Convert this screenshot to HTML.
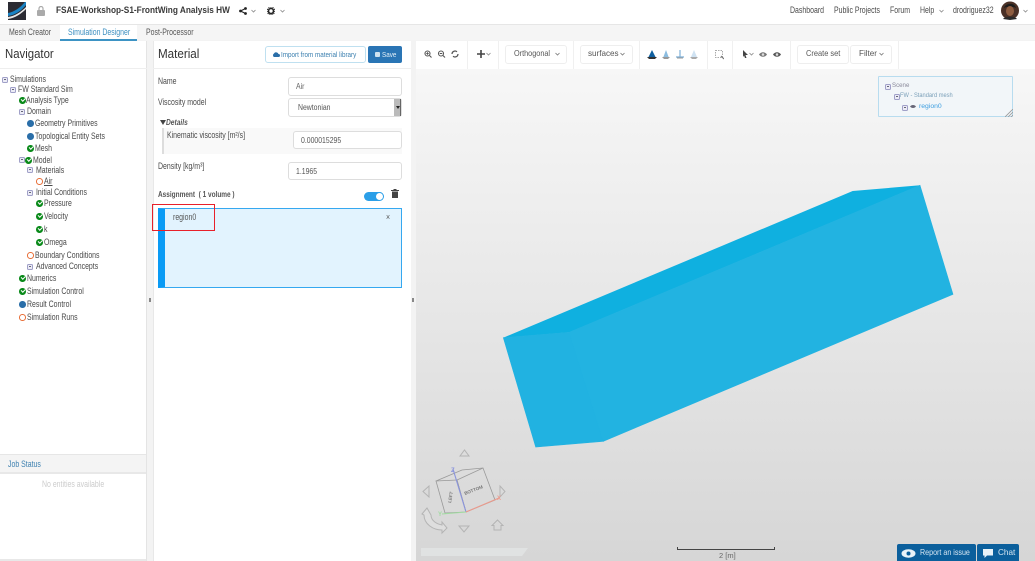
<!DOCTYPE html>
<html><head><meta charset="utf-8"><style>
html,body{margin:0;padding:0}
body{width:1035px;height:561px;overflow:hidden;position:relative;background:#f3f3f3;font-family:"Liberation Sans",sans-serif;font-size:8.800px;color:#4a4a4a}
.b{position:absolute;box-sizing:border-box}
.t{position:absolute;white-space:nowrap;line-height:10px;transform:scaleX(.79);transform-origin:left center}
.ok,.dot,.ring,.ex{position:absolute;box-sizing:border-box;border-radius:50%;width:6.500px;height:6.500px}
.ok{background:#0a8a1a}
.ok:after{content:"";position:absolute;left:1.500px;top:1.300px;width:2.800px;height:1.500px;border-left:1px solid #fff;border-bottom:1px solid #fff;transform:rotate(-45deg)}
.dot{background:#2a6ea8}
.ring{border:1.300px solid #e8703a;background:#fff}
.ex{width:5.500px;height:5.500px;border-radius:1.500px;border:1px solid #a0a0c8;background:#ececf6}
.ex:after{content:"";position:absolute;left:.7px;top:1.200px;width:2.200px;height:1px;background:#667}
.in{position:absolute;box-sizing:border-box;background:#fff;border:1px solid #ddd;border-radius:3px;color:#555;font-size:8px;line-height:17px;padding-left:7px;white-space:nowrap}
.in span{display:inline-block;transform:scaleX(.86);transform-origin:left center}
</style></head><body>
<!-- top bar -->
<div class="b" style="left:0;top:0;width:1035px;height:25px;background:#fff;border-bottom:1px solid #e6e6e6"></div>
<svg class="b" style="left:8px;top:2px" width="18" height="18" viewBox="0 0 18 18"><rect width="18" height="18" fill="#2b2b33"/><path d="M0 11C6 10 12 6 17 0H18V3C13 9 7 13 0 14Z" fill="#1a83c4"/><path d="M0 15C7 14 13 10 18 5V7C13 12 7 16 0 17Z" fill="#e8e8e8"/></svg>
<svg class="b" style="left:37px;top:6px" width="8" height="10" viewBox="0 0 8 10"><path d="M2 4V2.500a2 2 0 0 1 4 0V4" fill="none" stroke="#aaa" stroke-width="1.200"/><rect y="4" width="8" height="6" rx="1" fill="#aaa"/></svg>
<div class="t" style="left:56px;top:5px;font-size:9.500px;font-weight:bold;color:#3a3a3a;line-height:12px;transform:scaleX(.87)">FSAE-Workshop-S1-FrontWing Analysis HW</div>
<svg class="b" style="left:239px;top:7px" width="8" height="8" viewBox="0 0 8 8"><circle cx="1.500" cy="4" r="1.400" fill="#222"/><circle cx="6.500" cy="1.500" r="1.400" fill="#222"/><circle cx="6.500" cy="6.500" r="1.400" fill="#222"/><path d="M1.500 4L6.500 1.500M1.500 4L6.500 6.500" stroke="#222"/></svg>
<svg class="b" style="left:251px;top:9px" width="5" height="4" viewBox="0 0 5 4"><path d="M.5 1L2.500 3L4.500 1" fill="none" stroke="#888" stroke-width=".8"/></svg>
<svg class="b" style="left:267px;top:7px" width="8" height="8" viewBox="0 0 8 8"><circle cx="4" cy="4" r="2.500" fill="none" stroke="#222" stroke-width="1.600"/><circle cx="4" cy="4" r="3.900" fill="none" stroke="#222" stroke-width="1" stroke-dasharray="1.200 1"/></svg>
<svg class="b" style="left:280px;top:9px" width="5" height="4" viewBox="0 0 5 4"><path d="M.5 1L2.500 3L4.500 1" fill="none" stroke="#888" stroke-width=".8"/></svg>
<div class="t" style="left:790px;top:5px">Dashboard</div>
<div class="t" style="left:834px;top:5px">Public Projects</div>
<div class="t" style="left:890px;top:5px">Forum</div>
<div class="t" style="left:920px;top:5px">Help</div>
<svg class="b" style="left:939px;top:9px" width="5" height="4" viewBox="0 0 5 4"><path d="M.5 1L2.500 3L4.500 1" fill="none" stroke="#888" stroke-width=".8"/></svg>
<div class="t" style="left:953px;top:5px">drodriguez32</div>
<svg class="b" style="left:1001px;top:1px" width="18" height="19" viewBox="0 0 18 19"><circle cx="9" cy="9.500" r="9" fill="#4a3026"/><path d="M3 7C4 2 14 1 15 7L13 6H5Z" fill="#1c1c1c"/><ellipse cx="9" cy="10" rx="4" ry="5" fill="#8f5d40"/><path d="M2 18C4 15 14 15 16 18L9 19Z" fill="#2a2a2a"/></svg>
<svg class="b" style="left:1023px;top:9px" width="5" height="4" viewBox="0 0 5 4"><path d="M.5 1L2.500 3L4.500 1" fill="none" stroke="#888" stroke-width=".8"/></svg>

<!-- tabs -->
<div class="b" style="left:0;top:25px;width:1035px;height:15px;background:#f5f5f5"></div>
<div class="b" style="left:60px;top:25px;width:77px;height:16px;background:#fff;border-bottom:2px solid #3d93c4"></div>
<div class="t" style="left:9px;top:27px;color:#555">Mesh Creator</div>
<div class="t" style="left:68px;top:27px;color:#3d8fc0">Simulation Designer</div>
<div class="t" style="left:146px;top:27px;color:#555">Post-Processor</div>

<!-- navigator -->
<div class="b" style="left:0;top:41px;width:147px;height:520px;background:#fff;border-right:1px solid #e4e4e4"></div>
<div class="b" style="left:0;top:68px;width:147px;height:1px;background:#eee"></div>
<div class="t" style="left:5px;top:47px;font-size:12.500px;line-height:14px;color:#333;transform:scaleX(.91)">Navigator</div>
<i class="ex" style="left:2px;top:77px"></i><div class="t" style="left:10px;top:74px">Simulations</div>
<i class="ex" style="left:10px;top:87px"></i><div class="t" style="left:18px;top:84px">FW Standard Sim</div>
<i class="ok" style="left:19px;top:97px"></i><div class="t" style="left:26px;top:95px">Analysis Type</div>
<i class="ex" style="left:19px;top:109px"></i><div class="t" style="left:27px;top:106px">Domain</div>
<i class="dot" style="left:27px;top:120px"></i><div class="t" style="left:35px;top:118px">Geometry Primitives</div>
<i class="dot" style="left:27px;top:133px"></i><div class="t" style="left:35px;top:131px">Topological Entity Sets</div>
<i class="ok" style="left:27px;top:145px"></i><div class="t" style="left:35px;top:143px">Mesh</div>
<i class="ex" style="left:19px;top:157px"></i><i class="ok" style="left:25px;top:157px"></i><div class="t" style="left:33px;top:155px">Model</div>
<i class="ex" style="left:27px;top:167px"></i><div class="t" style="left:36px;top:165px">Materials</div>
<i class="ring" style="left:36px;top:178px"></i><div class="t" style="left:44px;top:176px;text-decoration:underline">Air</div>
<i class="ex" style="left:27px;top:190px"></i><div class="t" style="left:36px;top:187px">Initial Conditions</div>
<i class="ok" style="left:36px;top:200px"></i><div class="t" style="left:44px;top:198px">Pressure</div>
<i class="ok" style="left:36px;top:213px"></i><div class="t" style="left:44px;top:211px">Velocity</div>
<i class="ok" style="left:36px;top:226px"></i><div class="t" style="left:44px;top:224px">k</div>
<i class="ok" style="left:36px;top:239px"></i><div class="t" style="left:44px;top:237px">Omega</div>
<i class="ring" style="left:27px;top:252px"></i><div class="t" style="left:35px;top:250px">Boundary Conditions</div>
<i class="ex" style="left:27px;top:264px"></i><div class="t" style="left:36px;top:261px">Advanced Concepts</div>
<i class="ok" style="left:19px;top:275px"></i><div class="t" style="left:27px;top:273px">Numerics</div>
<i class="ok" style="left:19px;top:288px"></i><div class="t" style="left:27px;top:286px">Simulation Control</div>
<i class="dot" style="left:19px;top:301px"></i><div class="t" style="left:27px;top:299px">Result Control</div>
<i class="ring" style="left:19px;top:314px"></i><div class="t" style="left:27px;top:312px">Simulation Runs</div>
<div class="b" style="left:149px;top:298px;width:2px;height:4px;background:#888"></div>
<div class="b" style="left:0;top:454px;width:146px;height:20px;background:#f4f4f4;border-top:1px solid #e6e6e6;border-bottom:2px solid #e8e8e8"></div>
<div class="t" style="left:8px;top:459px;color:#3d80b0">Job Status</div>
<div class="t" style="left:42px;top:479px;color:#ccc">No entities available</div>
<div class="b" style="left:0;top:559px;width:146px;height:2px;background:#e8e8e8"></div>

<!-- material panel -->
<div class="b" style="left:153px;top:41px;width:258px;height:520px;background:#fff;border-left:1px solid #e8e8e8"></div>
<div class="b" style="left:153px;top:68px;width:258px;height:1px;background:#eee"></div>
<div class="t" style="left:158px;top:47px;font-size:12.500px;line-height:14px;color:#333;transform:scaleX(.93)">Material</div>
<div class="b" style="left:265px;top:46px;width:101px;height:17px;border:1px solid #bfe0f0;border-radius:3px;background:#fff"></div>
<svg class="b" style="left:272px;top:51px" width="8" height="7" viewBox="0 0 8 7"><path d="M2 6a2 2 0 0 1 0-3.500A2.500 2.500 0 0 1 6.500 3 1.500 1.500 0 0 1 6.500 6Z" fill="#2a6ea8"/></svg>
<div class="t" style="left:281px;top:50px;color:#3d80b0;font-size:7.600px;transform:scaleX(.83)">Import from material library</div>
<div class="b" style="left:368px;top:46px;width:34px;height:17px;background:#2a75b5;border-radius:2px"></div>
<div class="b" style="left:375px;top:52px;width:5px;height:5px;background:#cfe2f0;border-radius:1px"></div>
<div class="t" style="left:382px;top:50px;color:#e4f0f8;font-size:7.600px;transform:scaleX(.83)">Save</div>

<div class="t" style="left:158px;top:76px">Name</div>
<div class="in" style="left:288px;top:77px;width:114px;height:19px;color:#666"><span>Air</span></div>
<div class="t" style="left:158px;top:97px">Viscosity model</div>
<div class="in" style="left:288px;top:98px;width:114px;height:19px;padding-left:9px"><span>Newtonian</span></div>
<div class="b" style="left:394px;top:99px;width:7px;height:17px;background:#bbb;border-right:1px solid #666"></div>
<div class="b" style="left:396px;top:106px;border:2px solid transparent;border-top:3px solid #222;width:0;height:0"></div>
<div class="b" style="left:160px;top:120px;border:3px solid transparent;border-top:5px solid #444;width:0;height:0"></div>
<div class="t" style="left:166px;top:118px;font-style:italic;font-weight:bold;color:#555;font-size:8px;transform:scaleX(.83)">Details</div>
<div class="b" style="left:162px;top:128px;width:240px;height:26px;background:#f9f9f9;border-left:2px solid #ddd"></div>
<div class="t" style="left:167px;top:130px">Kinematic viscosity [m²/s]</div>
<div class="in" style="left:293px;top:131px;width:109px;height:18px;padding-left:7px"><span>0.000015295</span></div>
<div class="t" style="left:158px;top:161px">Density [kg/m³]</div>
<div class="in" style="left:288px;top:162px;width:114px;height:18px"><span>1.1965</span></div>
<div class="t" style="left:158px;top:190px;font-weight:bold;color:#555;font-size:7.800px;transform:scaleX(.83)">Assignment &nbsp;( 1 volume )</div>
<div class="b" style="left:364px;top:192px;width:20px;height:9px;background:#2b9fe8;border-radius:5px"></div>
<div class="b" style="left:376px;top:193px;width:7px;height:7px;background:#fff;border-radius:50%"></div>
<svg class="b" style="left:391px;top:189px" width="8" height="9" viewBox="0 0 8 9"><path d="M0 1.500H8M3 1.500V.5H5V1.500" stroke="#444" fill="none"/><path d="M1 2.500H7V9H1Z" fill="#444"/></svg>
<div class="b" style="left:158px;top:208px;width:244px;height:80px;background:#e2f3fe;border:1px solid #35a8f0;border-left:7px solid #0a9bf5"></div>
<div class="t" style="left:173px;top:212px;color:#555">region0</div>
<div class="t" style="left:386px;top:212px;color:#555">×</div>
<div class="b" style="left:152px;top:204px;width:63px;height:27px;border:1px solid #e8202a"></div>
<div class="b" style="left:412px;top:298px;width:2px;height:4px;background:#888"></div>

<!-- viewport -->
<div class="b" style="left:416px;top:69px;width:619px;height:492px;background:linear-gradient(#f7f7f7,#d6d6d6)"></div>
<div class="b" style="left:416px;top:41px;width:619px;height:28px;background:#fff"></div>
<div class="b" style="left:467px;top:41px;width:1px;height:28px;background:#f0f0f0"></div>
<div class="b" style="left:498px;top:41px;width:1px;height:28px;background:#f0f0f0"></div>
<div class="b" style="left:573px;top:41px;width:1px;height:28px;background:#f0f0f0"></div>
<div class="b" style="left:639px;top:41px;width:1px;height:28px;background:#f0f0f0"></div>
<div class="b" style="left:707px;top:41px;width:1px;height:28px;background:#f0f0f0"></div>
<div class="b" style="left:732px;top:41px;width:1px;height:28px;background:#f0f0f0"></div>
<div class="b" style="left:790px;top:41px;width:1px;height:28px;background:#f0f0f0"></div>
<div class="b" style="left:898px;top:41px;width:1px;height:28px;background:#f0f0f0"></div>
<svg class="b" style="left:424px;top:50px" width="40" height="8" viewBox="0 0 40 8" fill="none" stroke="#555" stroke-width="1.100"><circle cx="3.500" cy="3.500" r="2.500"/><path d="M5.500 5.500L7.500 7.500M2.300 3.500H4.700M3.500 2.300V4.700"/><circle cx="17" cy="3.500" r="2.500"/><path d="M19 5.500L21 7.500M15.800 3.500H18.200"/><path d="M28 4a3 3 0 0 1 5-2.200M34 4a3 3 0 0 1-5 2.200" stroke-width="1.200"/></svg>
<svg class="b" style="left:477px;top:50px" width="8" height="8" viewBox="0 0 8 8"><path d="M4 0V8M0 4H8" stroke="#444" stroke-width="1.600"/></svg>
<svg class="b" style="left:486px;top:52px" width="5" height="4" viewBox="0 0 5 4"><path d="M.5 1L2.500 3L4.500 1" fill="none" stroke="#888" stroke-width=".8"/></svg>
<div class="b" style="left:505px;top:45px;width:62px;height:19px;border:1px solid #eee;border-radius:3px"></div>
<div class="t" style="left:514px;top:49px;font-size:8.100px;color:#555;transform:scaleX(.9)">Orthogonal</div>
<svg class="b" style="left:555px;top:52px" width="5" height="4" viewBox="0 0 5 4"><path d="M.5 1L2.500 3L4.500 1" fill="none" stroke="#777" stroke-width=".8"/></svg>
<div class="b" style="left:580px;top:45px;width:53px;height:19px;border:1px solid #eee;border-radius:3px"></div>
<div class="t" style="left:588px;top:49px;font-size:8.100px;color:#555;transform:none">surfaces</div>
<svg class="b" style="left:620px;top:52px" width="5" height="4" viewBox="0 0 5 4"><path d="M.5 1L2.500 3L4.500 1" fill="none" stroke="#777" stroke-width=".8"/></svg>
<svg class="b" style="left:647px;top:50px" width="54" height="10" viewBox="0 0 54 10"><path d="M5 0L9 8H1Z" fill="#0f5f9f"/><path d="M0 7H10L8 9H2Z" fill="#333"/><path d="M19 0L22 8H16Z" fill="#8cbde0"/><path d="M15 7H23L21 9H17Z" fill="#999"/><path d="M33 0V7M29 7H37" stroke="#7fb0d8" stroke-width="1.200"/><path d="M30 8L36 8" stroke="#999"/><path d="M47 0L50 7H44Z" fill="#cfe2f2"/><path d="M43 7H51L49 9H45Z" fill="#aaa"/></svg>
<svg class="b" style="left:715px;top:50px" width="9" height="10" viewBox="0 0 9 10"><rect x=".5" y=".5" width="7" height="7" fill="none" stroke="#aaa" stroke-dasharray="1.500 1"/><path d="M6 6L9 9" stroke="#777" stroke-width="1.200"/></svg>
<svg class="b" style="left:742px;top:50px" width="9" height="9" viewBox="0 0 9 9"><path d="M1 0L6 5H3.500L4.500 8H3L2 5.500L1 7Z" fill="#444"/></svg>
<svg class="b" style="left:749px;top:52px" width="5" height="4" viewBox="0 0 5 4"><path d="M.5 1L2.500 3L4.500 1" fill="none" stroke="#888" stroke-width=".8"/></svg>
<svg class="b" style="left:759px;top:51px" width="24" height="7" viewBox="0 0 24 7"><path d="M0 3.500C2 .5 6 .5 8 3.500C6 6.500 2 6.500 0 3.500Z" fill="#777"/><circle cx="4" cy="3.500" r="1.300" fill="#ddd"/><path d="M14 3.500C16 .5 20 .5 22 3.500C20 6.500 16 6.500 14 3.500Z" fill="#555"/><circle cx="18" cy="3.500" r="1.300" fill="#ddd"/></svg>
<div class="b" style="left:797px;top:45px;width:52px;height:19px;border:1px solid #eee;border-radius:3px"></div>
<div class="t" style="left:806px;top:49px;font-size:8.100px;color:#555;transform:scaleX(.92)">Create set</div>
<div class="b" style="left:850px;top:45px;width:42px;height:19px;border:1px solid #eee;border-radius:3px"></div>
<div class="t" style="left:859px;top:49px;font-size:8.100px;color:#555;transform:none">Filter</div>
<svg class="b" style="left:879px;top:52px" width="5" height="4" viewBox="0 0 5 4"><path d="M.5 1L2.500 3L4.500 1" fill="none" stroke="#777" stroke-width=".8"/></svg>

<!-- scene tree -->
<div class="b" style="left:878px;top:76px;width:135px;height:41px;background:#f2f6f9;border:1px solid #b8dcef;border-radius:1px"></div>
<i class="ex" style="left:885px;top:84px"></i><div class="t" style="left:892px;top:81px;font-size:6.800px;color:#889;transform:scaleX(.9)">Scene</div>
<i class="ex" style="left:894px;top:94px"></i><div class="t" style="left:900px;top:91px;font-size:6.800px;color:#7a9fb8;transform:scaleX(.84)">FW - Standard mesh</div>
<i class="ex" style="left:902px;top:105px"></i>
<svg class="b" style="left:910px;top:104px" width="6" height="5" viewBox="0 0 6 5"><path d="M0 2.500C1.500 .5 4.500 .5 6 2.500C4.500 4.500 1.500 4.500 0 2.500Z" fill="#667"/></svg>
<div class="t" style="left:919px;top:102px;font-size:6.800px;color:#3d9ee0;transform:none">region0</div>
<svg class="b" style="left:1005px;top:109px" width="8" height="8" viewBox="0 0 8 8"><path d="M0 8L8 0M3 8L8 3M6 8L8 6" stroke="#999" stroke-width=".8"/></svg>

<!-- box -->
<svg class="b" style="left:0;top:0" width="1035" height="561">
<polygon points="503.300,337.700 852.700,191 920,185.300 569.300,332.300" fill="#0fb0e0"/>
<polygon points="503.300,337.700 569.300,332.300 603.300,441.300 535.700,447" fill="#21b2e1" stroke="#21b2e1" stroke-width=".6"/>
<polygon points="569.300,332.300 920,185.300 953,294.300 603.300,441.300" fill="#22b3e1" stroke="#22b3e1" stroke-width=".6"/>
</svg>

<!-- gizmo -->
<svg class="b" style="left:415px;top:440px" width="130" height="121" viewBox="0 0 130 121" fill="none">
<path d="M45 16L49.500 10L54 16Z" stroke="#b4b4b4"/>
<path d="M44 86L49 92L54 86Z" stroke="#b4b4b4"/>
<path d="M14 46L8 51.500L14 57Z" stroke="#b4b4b4"/>
<path d="M85 46L90 51.500L85 57Z" stroke="#b4b4b4"/>
<path d="M21 41L30 73L51 72L42 40Z" stroke="#999" stroke-width=".8"/>
<path d="M42 40L68 28L80 60L51 72Z" stroke="#999" stroke-width=".8"/>
<path d="M21 41L47 30L68 28" stroke="#999" stroke-width=".8"/>
<path d="M51 72L38 29" stroke="#8a94dc" stroke-width="1.100"/>
<path d="M51 72L84 58" stroke="#eb9a8c" stroke-width="1.100"/>
<path d="M51 72L27 74" stroke="#a0dca0" stroke-width="1.100"/>
<text x="36" y="32" font-size="6" fill="#8a94dc" font-family="Liberation Sans" font-weight="bold">Z</text>
<text x="82" y="60" font-size="6" fill="#eb9a8c" font-family="Liberation Sans" font-weight="bold">X</text>
<text x="23" y="76" font-size="6" fill="#a0dca0" font-family="Liberation Sans" font-weight="bold">Y</text>
<text font-size="4.500" fill="#777" font-family="Liberation Sans" font-weight="bold" transform="translate(50,55) rotate(-21)">BOTTOM</text>
<text font-size="4.500" fill="#777" font-family="Liberation Sans" font-weight="bold" transform="translate(36,63) rotate(-80)">LEFT</text>
<path d="M12 68L16 75C16 81 22 84 27 85V82L32 88L27 93V90C18 90 9 84 9 75L7 74Z" stroke="#b4b4b4" fill="#dedede"/>
<path d="M82.500 80L77 85.500H79V90H86V85.500H88Z" stroke="#b4b4b4"/>
<path d="M6 108H113L107 116H6Z" fill="#e0e2e2" stroke="none"/>
</svg>

<!-- scale -->
<div class="b" style="left:677px;top:547px;width:98px;height:3px;border:1px solid #444;border-top:none"></div>
<div class="t" style="left:719px;top:551px;font-size:7.500px;color:#666;transform:none">2 [m]</div>

<!-- footer buttons -->
<div class="b" style="left:897px;top:544px;width:79px;height:17px;background:#0b5f9c;border-radius:2px 2px 0 0"></div>
<svg class="b" style="left:901px;top:549px" width="15" height="9" viewBox="0 0 15 9"><ellipse cx="7.500" cy="4.500" rx="7" ry="4.200" fill="#e8f2f8"/><circle cx="7.500" cy="4.500" r="2" fill="#0b5f9c"/></svg>
<div class="t" style="left:920px;top:548px;color:#d6e6f2;font-size:8.200px;transform:scaleX(.87)">Report an issue</div>
<div class="b" style="left:977px;top:544px;width:42px;height:17px;background:#0b5f9c;border-radius:2px 2px 0 0"></div>
<svg class="b" style="left:983px;top:549px" width="11" height="9" viewBox="0 0 11 9"><path d="M0 0H10V6.500H4L1.500 9V6.500H0Z" fill="#e8f2f8"/></svg>
<div class="t" style="left:998px;top:548px;color:#d6e6f2;font-size:8.200px;transform:none">Chat</div>
</body></html>
